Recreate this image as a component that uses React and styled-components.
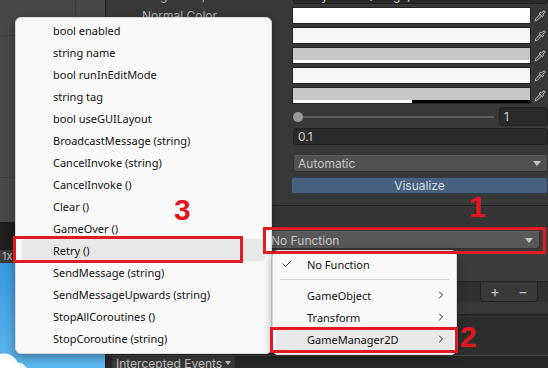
import styled, { createGlobalStyle } from 'styled-components';
import { Pipette, Check, ChevronRight } from 'lucide-react';

const GlobalStyle = createGlobalStyle`
  body {
    margin: 0;
    background: #383838;
    overflow: hidden;
  }
`;

const Screen = styled.div`
  position: relative;
  width: 548px;
  height: 368px;
  display: flex;
  overflow: hidden;
  font-family: Inter, 'Noto Sans', sans-serif;
`;

/* ---------- scene / game view on the left ---------- */

const SceneView = styled.div`
  width: 105px;
  flex-shrink: 0;
  display: flex;
  flex-direction: column;
  border-right: 1px solid #1b1b1b;
`;

const SceneGrid = styled.div`
  height: 222px;
  background-color: #474747;
  background-image: linear-gradient(#3c3c3c 1px, transparent 1px),
    linear-gradient(90deg, #3c3c3c 1px, transparent 1px);
  background-size: 142px 142px;
  background-position: 75px 35px;
`;

const DarkBand = styled.div`
  height: 28px;
  background: #1e1e1e;
`;

const GameToolbar = styled.div`
  height: 13px;
  background: #3b3b3b;
  color: #bdbdbd;
  font-size: 11px;
  line-height: 13px;
  padding-left: 2px;
`;

const Sky = styled.div`
  flex: 1;
  background: radial-gradient(circle at 4px 100%, #ffffff 0 14px, transparent 15px),
    radial-gradient(circle at 18px 104%, #f4f8fb 0 9px, transparent 10px),
    linear-gradient(#3896de, #5db6ec);
`;

/* ---------- inspector ---------- */

const Inspector = styled.div`
  flex: 1;
  display: flex;
  flex-direction: column;
  background: #383838;
  color: #c4c4c4;
  font-size: 12px;
`;

const PropertyRow = styled.div`
  display: grid;
  grid-template-columns: 187px 1fr;
  align-items: center;
  height: ${(p) => p.$h}px;
  margin-top: ${(p) => p.$mt || 0}px;
  flex-shrink: 0;
`;

const Label = styled.div`
  padding-left: 36px;
  color: #b4b4b4;
  white-space: nowrap;
`;

const ObjectField = styled.div`
  height: 100%;
  display: flex;
  align-items: center;
  background: #2a2a2a;
  border: 1px solid #212121;
  border-radius: 3px;
  padding-left: 4px;
  color: #d2d2d2;
  box-sizing: border-box;
`;

const ColorField = styled.div`
  height: 100%;
  display: flex;
`;

const Swatch = styled.div`
  flex: 1;
  display: flex;
  flex-direction: column;
  border: 1px solid #232323;
  margin-left: -1px;
`;

const SwatchColor = styled.div`
  flex: 1;
  background: ${(p) => p.$color};
`;

const AlphaBar = styled.div`
  height: 3px;
  background: linear-gradient(to right, #fff ${(p) => p.$alpha}%, #000 ${(p) => p.$alpha}%);
`;

const PickerButton = styled.div`
  width: 17px;
  display: flex;
  align-items: center;
  justify-content: center;
  color: #d0d0d0;
`;

const SliderField = styled.div`
  display: flex;
  align-items: center;
  gap: 5px;
  height: 100%;
`;

const SliderTrack = styled.div`
  position: relative;
  flex: 1;
  height: 2px;
  margin-left: 5px;
  background: #5e5e5e;
`;

const SliderThumb = styled.div`
  position: absolute;
  left: -5px;
  top: -4px;
  width: 10px;
  height: 10px;
  border-radius: 50%;
  background: #999;
`;

const NumberField = styled.div`
  width: 49px;
  height: 100%;
  box-sizing: border-box;
  background: #2a2a2a;
  border: 1px solid #212121;
  border-radius: 3px;
  padding-left: 4px;
  display: flex;
  align-items: center;
  color: #d2d2d2;
`;

const TextField = styled(NumberField)`
  width: auto;
`;

const Dropdown = styled.div`
  height: 100%;
  box-sizing: border-box;
  display: flex;
  align-items: center;
  justify-content: space-between;
  padding: 0 6px 0 4px;
  background: ${(p) => p.$bg || '#515151'};
  border: 1px solid #303030;
  border-top-color: #5e5e5e;
  border-radius: 3px;
  color: #c4c4c4;
`;

const Arrow = styled.span`
  width: 0;
  height: 0;
  border-left: 4px solid transparent;
  border-right: 4px solid transparent;
  border-top: 5px solid #c4c4c4;
`;

const Button = styled.div`
  height: 100%;
  margin-left: -2px;
  box-sizing: border-box;
  display: flex;
  align-items: center;
  justify-content: center;
  background: #47617e;
  border: 1px solid #2f3e4f;
  border-radius: 3px;
  color: #d4dbe3;
`;

const Separator = styled.div`
  margin-top: 11px;
  height: 20px;
  flex-shrink: 0;
  border-top: 1px solid #262626;
  border-bottom: 1px solid #2e2e2e;
  background: #353535;
`;

const EventRow = styled.div`
  height: 26px;
  flex-shrink: 0;
  box-sizing: border-box;
  padding: 4px 8px 4px 160px;
  background: #3b3b3b;
`;

const FunctionDropdown = styled(Dropdown)`
  position: relative;
  z-index: 3;
  height: 18px;
`;

const EventBody = styled.div`
  height: 28px;
  flex-shrink: 0;
  background: #3c3c3c;
  border-bottom: 1px solid #242424;
`;

const ListFooter = styled.div`
  height: 20px;
  flex-shrink: 0;
  display: flex;
  justify-content: flex-end;
  padding-right: 10px;
  background: #303030;
`;

const FooterTab = styled.div`
  width: 56px;
  display: flex;
  align-items: center;
  justify-content: space-around;
  background: #393939;
  border: 1px solid #242424;
  border-top: none;
  border-radius: 0 0 4px 4px;
  color: #c0c0c0;
  font-size: 15px;
`;

const Gap = styled.div`
  height: 12px;
  flex-shrink: 0;
  background: #383838;
  border-bottom: 1px solid #232323;
`;

const DarkSection = styled.div`
  flex: 1;
  background: #2e2e2e;
  border-bottom: 1px solid #444;
`;

const BottomBar = styled.div`
  height: 12px;
  flex-shrink: 0;
  display: flex;
  align-items: flex-start;
  gap: 8px;
  padding-left: 6px;
  background: #282828;
`;

const BarButton = styled.div`
  height: 14px;
  padding: 0 4px;
  display: flex;
  align-items: center;
  gap: 3px;
  background: #3a3a3a;
  color: #c4c4c4;
  font-size: 12px;
  border-radius: 2px 2px 0 0;
`;

const SmallArrow = styled(Arrow)`
  border-left-width: 3px;
  border-right-width: 3px;
  border-top-width: 4px;
`;

/* ---------- context menus (overlays) ---------- */

const Menu = styled.div`
  position: absolute;
  left: ${(p) => p.$x}px;
  top: ${(p) => p.$y}px;
  width: ${(p) => p.$w}px;
  box-sizing: border-box;
  padding: ${(p) => p.$pad};
  background: #f9f9f9;
  border: 1px solid #d9d9d9;
  border-radius: 6px;
  box-shadow: 0 3px 8px rgba(0, 0, 0, 0.35);
  font-family: 'Noto Sans', sans-serif;
  font-size: 11px;
  color: #111;
  z-index: 5;
`;

const MenuItem = styled.div`
  height: 22px;
  margin: 0 6px;
  padding-left: 31px;
  display: flex;
  align-items: center;
  border-radius: 4px;
  white-space: nowrap;
  background: ${(p) => (p.$active ? '#e8e8e8' : 'transparent')};
`;

const SubItem = styled.div`
  height: 22px;
  margin: 0 3px;
  padding: 0 6px 0 5px;
  display: grid;
  grid-template-columns: 26px 1fr 12px;
  align-items: center;
  border-radius: 4px;
  white-space: nowrap;
  background: ${(p) => (p.$active ? '#e8e8e8' : 'transparent')};
`;

const MenuDivider = styled.div`
  height: 1px;
  margin: 4px 7px;
  background: #d4d4d4;
`;

/* ---------- red annotations ---------- */

const RedBox = styled.div`
  position: absolute;
  left: ${(p) => p.$x}px;
  top: ${(p) => p.$y}px;
  width: ${(p) => p.$w}px;
  height: ${(p) => p.$h}px;
  box-sizing: border-box;
  border: 3px solid #e11b22;
  z-index: 10;
`;

const Mark = styled.span`
  position: absolute;
  left: ${(p) => p.$x}px;
  top: ${(p) => p.$y}px;
  font-family: 'Liberation Sans', sans-serif;
  font-weight: 700;
  font-size: 30px;
  line-height: 30px;
  color: #e3161d;
  z-index: 10;
`;

const colors = [
  { color: '#ffffff', alpha: 100 },
  { color: '#f5f5f5', alpha: 100 },
  { color: '#c8c8c8', alpha: 100 },
  { color: '#f5f5f5', alpha: 100 },
  { color: '#c8c8c8', alpha: 50 },
];

const methods = [
  'bool enabled',
  'string name',
  'bool runInEditMode',
  'string tag',
  'bool useGUILayout',
  'BroadcastMessage (string)',
  'CancelInvoke (string)',
  'CancelInvoke ()',
  'Clear ()',
  'GameOver ()',
  'Retry ()',
  'SendMessage (string)',
  'SendMessageUpwards (string)',
  'StopAllCoroutines ()',
  'StopCoroutine (string)',
];

const targets = ['GameObject', 'Transform', 'GameManager2D'];

export default function App() {
  return (
    <Screen>
      <GlobalStyle />
      <SceneView>
        <SceneGrid />
        <DarkBand />
        <GameToolbar>1x</GameToolbar>
        <Sky />
      </SceneView>

      <Inspector>
        <PropertyRow $h={18} $mt={-14}>
          <Label>Target Graphic</Label>
          <ObjectField>RetryButton (Image)</ObjectField>
        </PropertyRow>
        {colors.map((c, i) => (
          <PropertyRow key={i} $h={17} $mt={3}>
            <Label>{i === 0 ? 'Normal Color' : ''}</Label>
            <ColorField>
              <Swatch>
                <SwatchColor $color={c.color} />
                <AlphaBar $alpha={c.alpha} />
              </Swatch>
              <PickerButton>
                <Pipette size={12} strokeWidth={2} />
              </PickerButton>
            </ColorField>
          </PropertyRow>
        ))}
        <PropertyRow $h={19} $mt={3}>
          <Label />
          <SliderField>
            <SliderTrack>
              <SliderThumb />
            </SliderTrack>
            <NumberField>1</NumberField>
          </SliderField>
        </PropertyRow>
        <PropertyRow $h={17} $mt={2}>
          <Label />
          <TextField>0.1</TextField>
        </PropertyRow>
        <PropertyRow $h={17} $mt={10}>
          <Label />
          <Dropdown>
            Automatic
            <Arrow />
          </Dropdown>
        </PropertyRow>
        <PropertyRow $h={17} $mt={5}>
          <Label />
          <Button>Visualize</Button>
        </PropertyRow>
        <Separator />
        <EventRow>
          <FunctionDropdown $bg="#585858">
            No Function
            <Arrow />
          </FunctionDropdown>
        </EventRow>
        <EventBody />
        <ListFooter>
          <FooterTab>
            <span>+</span>
            <span>−</span>
          </FooterTab>
        </ListFooter>
        <Gap />
        <DarkSection />
        <BottomBar>
          <BarButton>
            Intercepted Events
            <SmallArrow />
          </BarButton>
        </BottomBar>
      </Inspector>

      <Menu $x={15} $y={17} $w={257} $pad="1px 0 4px">
        {methods.map((m) => (
          <MenuItem key={m} $active={m === 'Retry ()'}>
            {m}
          </MenuItem>
        ))}
      </Menu>

      <Menu $x={272} $y={250} $w={185} $pad="2px 0 4px">
        <SubItem>
          <Check size={12} strokeWidth={1.6} />
          <span>No Function</span>
          <span />
        </SubItem>
        <MenuDivider />
        {targets.map((t) => (
          <SubItem key={t} $active={t === 'GameManager2D'}>
            <span />
            <span>{t}</span>
            <ChevronRight size={12} strokeWidth={1.8} />
          </SubItem>
        ))}
      </Menu>

      <RedBox $x={263} $y={227} $w={283} $h={27} />
      <RedBox $x={13} $y={236} $w={230} $h={27} />
      <RedBox $x={270} $y={327} $w={188} $h={26} />
      <Mark $x={469} $y={192}>1</Mark>
      <Mark $x={460} $y={322}>2</Mark>
      <Mark $x={174} $y={195}>3</Mark>
    </Screen>
  );
}
